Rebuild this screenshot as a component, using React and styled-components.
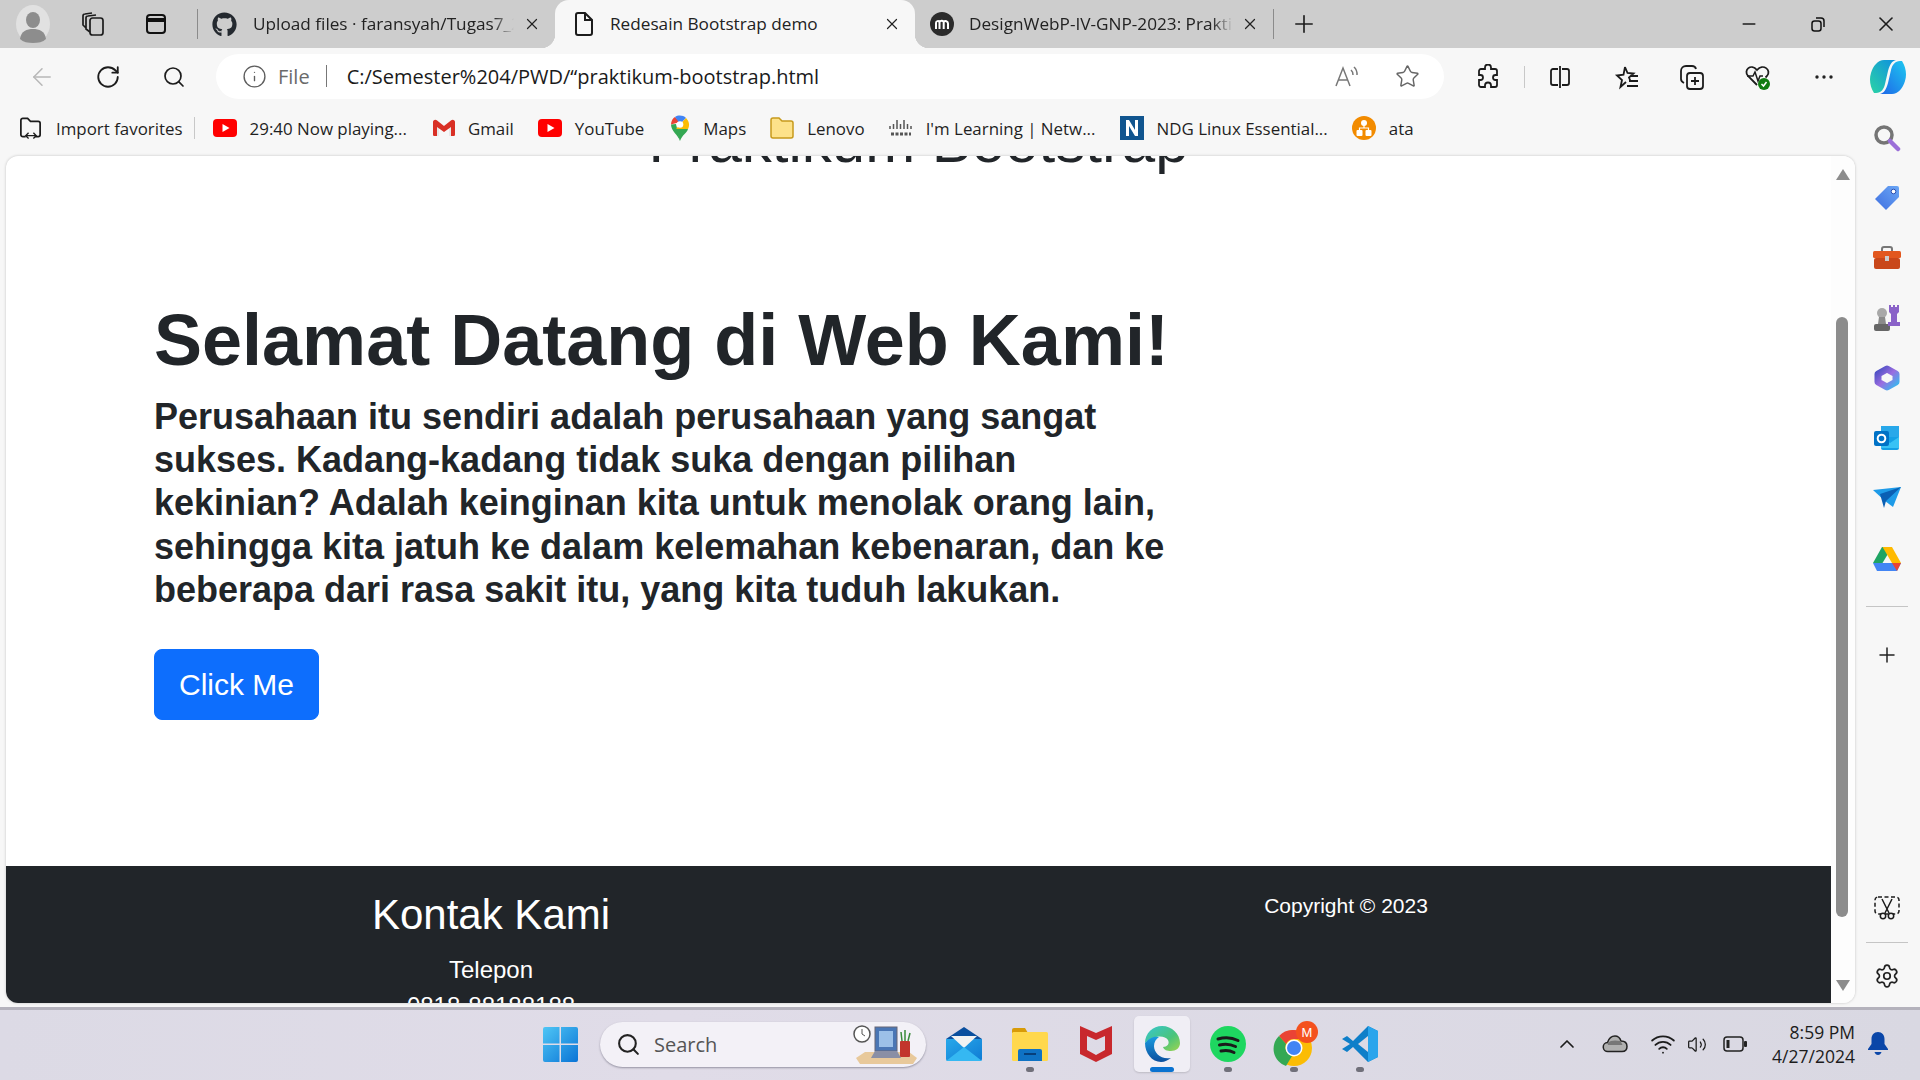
import React from "react";
import styled, { createGlobalStyle } from "styled-components";
import { FaGithub } from "react-icons/fa";
import { ArrowLeft, RotateCw, Search, Info, Star, Plus, X, Minus, ChevronUp, Settings, Wifi, Volume2 } from "lucide-react";

const GlobalStyle = createGlobalStyle`
  html, body { margin: 0; padding: 0; background: #f7f7f7; }
  body { font-family: "Liberation Sans", Arial, sans-serif; overflow: hidden; }
  * { box-sizing: border-box; }
`;

const uiFont = `"Open Sans", "Noto Sans", sans-serif`;

const Screen = styled.div`
  width: 1920px;
  height: 1080px;
  display: flex;
  flex-direction: column;
  background: #f7f7f7;
`;

const TabStrip = styled.div`
  height: 48px;
  flex: none;
  display: flex;
  align-items: stretch;
  background: #cdcdcd;
`;

const Slot = styled.div`
  flex: none;
  width: ${p => p.$w}px;
  display: flex;
  align-items: center;
  justify-content: center;
  color: ${p => p.$color || "#1c1c1c"};
`;

const StripDivider = styled.div`
  flex: none;
  width: 1px;
  height: 30px;
  align-self: center;
  margin: ${p => p.$margin || 0};
  background: #8b8b8b;
`;

const Tab = styled.div`
  position: relative;
  flex: none;
  width: ${p => p.$w}px;
  display: flex;
  align-items: center;
  gap: ${p => p.$gap}px;
  padding: 0 14px 0 ${p => p.$pad}px;
  background: ${p => (p.$active ? "#f7f7f7" : "transparent")};
  border-radius: 14px 14px 0 0;
  font: 17.2px ${uiFont};
  color: #222;

  ${p => p.$active && `
    &::before, &::after {
      content: "";
      position: absolute;
      bottom: 0;
      width: 14px;
      height: 14px;
    }
    &::before {
      left: -14px;
      background: radial-gradient(circle at 0 0, transparent 14px, #f7f7f7 14.5px);
    }
    &::after {
      right: -14px;
      background: radial-gradient(circle at 100% 0, transparent 14px, #f7f7f7 14.5px);
    }
  `}
`;

const TabTitle = styled.div`
  flex: 1;
  min-width: 0;
  margin-right: -7px;
  padding-bottom: 2px;
  white-space: nowrap;
  overflow: hidden;
  ${p => p.$fade && `mask-image: linear-gradient(to right, #000 92%, transparent 100%);`}
`;

const Spacer = styled.div`
  flex: 1;
`;

const Toolbar = styled.div`
  height: 57px;
  flex: none;
  display: flex;
  align-items: center;
  padding: 0 0 0 9px;
`;

const AddressBar = styled.div`
  flex: none;
  width: 1228px;
  height: 45px;
  margin-left: 9px;
  display: flex;
  align-items: center;
  padding: 0 0 1px 26px;
  background: #fff;
  border-radius: 23px;
  font: 20px ${uiFont};
`;

const FileLabel = styled.span`
  margin-left: 11px;
  color: #6a6a6a;
`;

const BarDivider = styled.div`
  flex: none;
  width: 1px;
  height: 22px;
  margin: ${p => p.$margin};
  background: ${p => p.$color || "#777"};
`;

const Url = styled.span`
  flex: 1;
  color: #1a1a1a;
  white-space: nowrap;
`;

const Body = styled.div`
  flex: 1;
  min-height: 0;
  display: flex;
`;

const MainColumn = styled.div`
  flex: 1;
  min-width: 0;
  display: flex;
  flex-direction: column;
`;

const Bookmarks = styled.div`
  height: 51px;
  flex: none;
  display: flex;
  align-items: center;
  padding: 0 0 5px 18px;
  font: 16.9px ${uiFont};
  color: #1f1f1f;
`;

const Bookmark = styled.div`
  flex: none;
  display: flex;
  align-items: center;
  gap: 13px;
  margin-right: ${p => p.$gap || 26}px;
  white-space: nowrap;
`;

const PageFrame = styled.div`
  flex: 1;
  min-height: 0;
  margin: 0 0 4px 6px;
  display: flex;
  background: #fff;
  border-radius: 12px;
  overflow: hidden;
  box-shadow: 0 0 3px rgba(0, 0, 0, 0.22);
`;

const PageContent = styled.div`
  flex: 1;
  min-width: 0;
  display: flex;
  flex-direction: column;
  overflow: hidden;
  color: #212529;
`;

const ClippedTitle = styled.h2`
  flex: none;
  margin: -50px 0 0;
  font-size: 60px;
  font-weight: 400;
  line-height: 72px;
  text-align: center;
`;

const Hero = styled.section`
  flex: 1;
  min-height: 0;
  padding: 119px 0 0 148px;
`;

const HeroTitle = styled.h1`
  margin: 0 0 12px;
  font-size: 72px;
  font-weight: 700;
  line-height: 86px;
`;

const Lead = styled.p`
  width: 1030px;
  margin: 0 0 38px;
  font-size: 36px;
  font-weight: 700;
  line-height: 43.2px;
`;

const PrimaryButton = styled.button`
  display: block;
  padding: 12px 24px;
  border: 1px solid #0d6efd;
  border-radius: 8px;
  background: #0d6efd;
  color: #fff;
  font: 30px/45px "Liberation Sans", Arial, sans-serif;
`;

const Footer = styled.footer`
  flex: none;
  height: 137px;
  display: grid;
  grid-template-columns: 855px 855px;
  justify-content: center;
  overflow: hidden;
  background: #212529;
  color: #fff;
  text-align: center;
`;

const FooterColumn = styled.div`
  padding-top: ${p => p.$top}px;
`;

const FooterHeading = styled.h3`
  margin: 0 0 12px;
  font-size: 42px;
  font-weight: 400;
  line-height: 50px;
`;

const FooterText = styled.p`
  margin: 0;
  font-size: ${p => p.$size || 24}px;
  line-height: 36px;
`;

const Scrollbar = styled.div`
  flex: none;
  width: 24px;
  position: relative;
  background: #fdfdfd;
`;

const ScrollThumb = styled.div`
  position: absolute;
  top: 161px;
  left: 5px;
  width: 12px;
  height: 600px;
  border-radius: 7px;
  background: #8c8c8c;
`;

const ScrollArrow = styled.div`
  position: absolute;
  left: 5px;
  ${p => (p.$down ? "bottom: 12px;" : "top: 13px;")}
  width: 0;
  height: 0;
  border-left: 7px solid transparent;
  border-right: 7px solid transparent;
  ${p => (p.$down ? "border-top: 11px solid #8c8c8c;" : "border-bottom: 11px solid #8c8c8c;")}
`;

const Sidebar = styled.aside`
  flex: none;
  width: 65px;
  display: flex;
  flex-direction: column;
  align-items: center;
  padding: 3px 2px 11px 0;
`;

const SideSlot = styled.div`
  flex: none;
  height: ${p => p.$h || 60}px;
  display: flex;
  align-items: center;
  justify-content: center;
  color: #222;
`;

const SideRule = styled.div`
  flex: none;
  width: 42px;
  height: 1px;
  margin: ${p => p.$margin || "0"};
  background: #c5c5c5;
`;

const Taskbar = styled.div`
  height: 73px;
  flex: none;
  display: flex;
  align-items: center;
  padding: 0 19px 2px 530px;
  border-top: 3px solid #b4b2bc;
  background: linear-gradient(90deg, #dcdae5, #e0dce8 35%, #d9d8e2);
`;

const SearchBox = styled.div`
  flex: none;
  width: 326px;
  height: 45px;
  margin: 0 5px 0 10px;
  display: flex;
  align-items: center;
  gap: 13px;
  padding: 0 8px 0 16px;
  border-radius: 23px;
  background: #f3f1f7;
  box-shadow: 0 1px 2px rgba(60, 60, 80, 0.45);
  font: 20px ${uiFont};
  color: #555;
`;

const AppSlot = styled.div`
  position: relative;
  flex: none;
  width: 66px;
  height: 56px;
  display: flex;
  align-items: center;
  justify-content: center;

  ${p => p.$active && `
    &::before {
      content: "";
      position: absolute;
      inset: 0 5px;
      border-radius: 5px;
      background: #f0eef5;
      box-shadow: 0 1px 2px rgba(0, 0, 0, 0.15);
    }
    & > svg { position: relative; }
  `}
`;

const RunDot = styled.span`
  position: absolute;
  left: 50%;
  bottom: 0;
  width: ${p => (p.$active ? 24 : 8)}px;
  height: 5px;
  margin-left: ${p => (p.$active ? -12 : -4)}px;
  border-radius: 3px;
  background: ${p => (p.$active ? "#0a72d0" : "#70707a")};
`;

const Clock = styled.div`
  flex: none;
  width: 92px;
  text-align: right;
  font: 17.5px/24px ${uiFont};
  color: #1c1c1c;
  white-space: nowrap;
`;

const MoodleIcon = () => (
  <svg width="24" height="24" viewBox="0 0 24 24">
    <circle cx="12" cy="12" r="12" fill="#2b2b2b" />
    <path d="M6 17v-6c0-2 2.500-2.600 3.500-1 1-1.600 3.200-1.600 4.200-.2 1.300-1.300 4.300-.8 4.300 1.700V17M9.500 10v7M13.700 10v7" stroke="#fff" strokeWidth="2" fill="none" />
  </svg>
);

const FileIcon = () => (
  <svg width="22" height="26" viewBox="0 0 22 26" fill="none" stroke="#1c1c1c" strokeWidth="2">
    <path d="M3 4a2 2 0 0 1 2-2h7l7 7v13a2 2 0 0 1-2 2H5a2 2 0 0 1-2-2z" />
    <path d="M12 2v7h7" />
  </svg>
);

const Avatar = () => (
  <svg width="34" height="38" viewBox="0 0 34 38">
    <ellipse cx="17" cy="19" rx="17" ry="19" fill="#e1e1e1" />
    <ellipse cx="17" cy="15" rx="7" ry="8" fill="#8d8d8d" />
    <path d="M4 34c1-8 7-10 13-10s12 2 13 10c-3 3-8 4-13 4S7 37 4 34z" fill="#8d8d8d" />
  </svg>
);

const WorkspaceIcon = () => (
  <svg width="26" height="26" viewBox="0 0 26 26" fill="none" stroke="#1c1c1c" strokeWidth="1.700">
    <rect x="10" y="7" width="13" height="17" rx="2.500" />
    <path d="M10 21 6 18V7a2 2 0 0 1 2-2l8-1M6 17 3 14V5a2 2 0 0 1 2-2l7-1" />
  </svg>
);

const TabActionsIcon = () => (
  <svg width="22" height="22" viewBox="0 0 22 22" fill="none" stroke="#111" strokeWidth="2">
    <rect x="2" y="2" width="18" height="18" rx="3" />
    <path d="M2 7h18" strokeWidth="4" />
  </svg>
);

const RestoreIcon = () => (
  <svg width="16" height="16" viewBox="0 0 16 16" fill="none" stroke="#111" strokeWidth="1.500">
    <rect x="2" y="5" width="9" height="10" rx="2.500" />
    <path d="M6 2h5a3 3 0 0 1 3 3v6" />
  </svg>
);

const ReadAloudIcon = () => (
  <svg width="26" height="24" viewBox="0 0 26 24" fill="none" stroke="#777" strokeWidth="1.500">
    <path d="M2 22 9 4l7 18M4.500 16h9" />
    <path d="M17 6a6 6 0 0 1 2 5M20 3a10 10 0 0 1 3 8" />
  </svg>
);

const PuzzleIcon = () => (
  <svg width="24" height="26" viewBox="0 0 24 26" fill="none" stroke="#1c1c1c" strokeWidth="1.800">
    <path d="M9 3.500a3 3 0 0 1 6 0V5h4a2 2 0 0 1 2 2v4h-1.500a2.500 2.500 0 0 0 0 5H21v5a2 2 0 0 1-2 2h-4v-1.500a3 3 0 0 0-6 0V23H5a2 2 0 0 1-2-2v-5h1.500a2.500 2.500 0 0 0 0-5H3V7a2 2 0 0 1 2-2h4z" />
  </svg>
);

const SplitIcon = () => (
  <svg width="24" height="24" viewBox="0 0 24 24" fill="none" stroke="#1c1c1c" strokeWidth="1.800">
    <path d="M10 4H5a2 2 0 0 0-2 2v12a2 2 0 0 0 2 2h5M14 4h5a2 2 0 0 1 2 2v12a2 2 0 0 1-2 2h-5M12 1v22" />
  </svg>
);

const FavoritesIcon = () => (
  <svg width="26" height="26" viewBox="0 0 26 26" fill="none" stroke="#1c1c1c" strokeWidth="1.800">
    <path d="M11 3l2.500 6 6 .5-4.500 4 1.200 3M12 18l-5.500 5 1.500-7-5-4.500 6.500-.8L11 3" />
    <path d="M17 12h7M15 17h9M13 22h11" />
  </svg>
);

const CollectionsIcon = () => (
  <svg width="26" height="26" viewBox="0 0 26 26" fill="none" stroke="#1c1c1c" strokeWidth="1.800">
    <rect x="8" y="9" width="16" height="16" rx="3" />
    <path d="M16 13v8M12 17h8M5 19c-2-1-3-2-3-4V7a5 5 0 0 1 5-5h6c2 0 3.500 1 4 3" />
  </svg>
);

const HealthIcon = () => (
  <svg width="28" height="28" viewBox="0 0 28 28" fill="none">
    <path d="M13 22 4 13c-5-6 3-13 9-6 6-7 15 0 10 6l-1.500 1.500" stroke="#1c1c1c" strokeWidth="1.800" />
    <path d="M3 13h6l2-4 3 9 2-5h3" stroke="#1c1c1c" strokeWidth="1.500" />
    <circle cx="20" cy="21" r="6" fill="#107c10" />
    <path d="M17.500 21l2 2 3-4" stroke="#fff" strokeWidth="1.500" />
  </svg>
);

const MoreIcon = () => (
  <svg width="20" height="6" viewBox="0 0 20 6" fill="#222">
    <circle cx="3" cy="3" r="1.700" />
    <circle cx="10" cy="3" r="1.700" />
    <circle cx="17" cy="3" r="1.700" />
  </svg>
);

const CopilotIcon = () => (
  <svg width="36" height="36" viewBox="0 0 36 36">
    <defs>
      <linearGradient id="copA" x1="0" y1="1" x2="1" y2="0">
        <stop offset="0" stopColor="#2bd4a5" />
        <stop offset="1" stopColor="#0f8fe0" />
      </linearGradient>
      <linearGradient id="copB" x1="0" y1="1" x2="1" y2="0">
        <stop offset="0" stopColor="#1e66e8" />
        <stop offset="1" stopColor="#1ec8f0" />
      </linearGradient>
    </defs>
    <path d="M14 1h12c-4 1-6 4-8 11l-3 13c-1 5-4 9-9 9H4C0 28-1 20 1 14 3 7 8 1 14 1z" fill="url(#copA)" />
    <path d="M22 35H10c4-1 6-4 8-11l3-13c1-5 4-9 9-9h2c4 6 5 14 3 20-2 7-7 13-13 13z" fill="url(#copB)" />
  </svg>
);

const ImportIcon = () => (
  <svg width="25" height="26" viewBox="0 0 26 26" fill="none" stroke="#1c1c1c" strokeWidth="1.800">
    <path d="M8 22H5a2 2 0 0 1-2-2V5a2 2 0 0 1 2-2h5l3 3h8a2 2 0 0 1 2 2v12a2 2 0 0 1-2 2h-3" />
    <path d="M9 21h9M11 18l-3 3 3 3M16 18l3 3-3 3" strokeWidth="1.400" />
  </svg>
);

const YoutubeIcon = () => (
  <svg width="24" height="18" viewBox="0 0 24 18">
    <rect width="24" height="18" rx="4" fill="#f00" />
    <path d="M9.500 5v8l7-4z" fill="#fff" />
  </svg>
);

const GmailIcon = () => (
  <svg width="22" height="18" viewBox="0 0 22 18">
    <path d="M3 17V4l8 6 8-6v13h-3V8l-5 4-5-4v9z" fill="#e8e8e8" />
    <path d="M0 3v12.500C0 16.500.7 17 1.500 17H4V8l7 5 7-5v9h2.500c.8 0 1.500-.5 1.500-1.500V3c0-2-2.200-3-3.800-1.800L11 7 3.800 1.200C2.200 0 0 1 0 3z" fill="#d93025" />
  </svg>
);

const MapsIcon = () => (
  <svg width="20" height="26" viewBox="0 0 20 26">
    <path d="M10 26C8 20 1 16 1 9.500L6 9z" fill="#34a853" />
    <path d="M1 9.500C1 6 3 3 5 2l5 5z" fill="#ea4335" />
    <path d="M5 2c3-2 8-2 11 1l-6 6z" fill="#4285f4" />
    <path d="M16 3c3 3 4 7 2 11L6 14z" fill="#fbbc04" />
    <path d="M10 26c2-6 7-8 8-12H6z" fill="#34a853" />
    <circle cx="10" cy="9.500" r="3.300" fill="#fff" />
  </svg>
);

const FolderIcon = () => (
  <svg width="24" height="24" viewBox="0 0 24 24">
    <path d="M1 4a2 2 0 0 1 2-2h6l3 3h9a2 2 0 0 1 2 2v13a2 2 0 0 1-2 2H3a2 2 0 0 1-2-2z" fill="#fde28a" stroke="#c79a1c" strokeWidth="1.500" />
  </svg>
);

const CiscoIcon = () => (
  <svg width="24" height="22" viewBox="0 0 24 22" stroke="#555" strokeWidth="1.500">
    <path d="M1 9v3M4.500 7v5M8 3v9M11.500 7v5M15 3v9M18.500 7v5M22 9v3" />
    <path d="M2 17h20" strokeWidth="3" strokeDasharray="3 1.500" />
  </svg>
);

const NetacadIcon = () => (
  <svg width="24" height="24" viewBox="0 0 24 24">
    <rect width="24" height="24" fill="#11558f" />
    <path d="M6 20V4h3l6 10V4h3v16h-3L9 10v10z" fill="#fff" />
  </svg>
);

const AtaIcon = () => (
  <svg width="24" height="24" viewBox="0 0 24 24">
    <circle cx="12" cy="12" r="12" fill="#f28b00" />
    <g fill="#fff">
      <circle cx="12" cy="7" r="3" />
      <rect x="4.500" y="14" width="6" height="6" rx="1" />
      <rect x="13.500" y="14" width="6" height="6" rx="1" />
    </g>
    <path d="M12 8v4M7.500 15v-3h9v3" stroke="#fff" strokeWidth="1.200" fill="none" />
  </svg>
);

const SideSearch = () => (
  <svg width="28" height="28" viewBox="0 0 28 28" fill="none">
    <circle cx="11" cy="11" r="8" stroke="#757575" strokeWidth="3.500" />
    <path d="M17 17l8 8" stroke="#9b6fd8" strokeWidth="4.500" strokeLinecap="round" />
  </svg>
);

const TagIcon = () => (
  <svg width="26" height="26" viewBox="0 0 26 26">
    <defs>
      <linearGradient id="tagG" x1="0" y1="1" x2="1" y2="0">
        <stop offset="0" stopColor="#3f6fe0" />
        <stop offset="1" stopColor="#6aa6f5" />
      </linearGradient>
    </defs>
    <path d="M14 1h9a2 2 0 0 1 2 2v9L12 25 1 14z" fill="url(#tagG)" />
    <circle cx="19.500" cy="6.500" r="2.300" fill="#fff" stroke="#2d4fb0" />
  </svg>
);

const ToolboxIcon = () => (
  <svg width="28" height="24" viewBox="0 0 28 24">
    <path d="M9 6V3a2 2 0 0 1 2-2h6a2 2 0 0 1 2 2v3" fill="none" stroke="#777" strokeWidth="2" />
    <rect y="5" width="28" height="7" rx="1.500" fill="#e2571e" />
    <rect x="1" y="12" width="26" height="11" rx="2" fill="#c9471a" />
    <rect x="12" y="10" width="4" height="5" fill="#ccc" />
  </svg>
);

const GamesIcon = () => (
  <svg width="28" height="28" viewBox="0 0 28 28">
    <circle cx="9" cy="9" r="5" fill="#a8a8a8" />
    <path d="M6 13h6l1 7H5z" fill="#8a8a8a" />
    <rect x="1" y="20" width="16" height="7" rx="2" fill="#666" />
    <path d="M16 1h2v2h2V1h2v2h2V1h2v7l-2 2v8h3v4H15v-4h3v-8l-2-2z" fill="#8a62c8" />
  </svg>
);

const M365Icon = () => (
  <svg width="26" height="28" viewBox="0 0 26 28" fill="none">
    <defs>
      <linearGradient id="m365G" x1="0" y1="0" x2="1" y2="1">
        <stop offset="0" stopColor="#4a4fc4" />
        <stop offset=".5" stopColor="#9a6de0" />
        <stop offset="1" stopColor="#3ab6ef" />
      </linearGradient>
    </defs>
    <path d="M13 5 4 10v8l9 5 9-5v-8z" stroke="url(#m365G)" strokeWidth="7" strokeLinejoin="round" />
  </svg>
);

const OutlookIcon = () => (
  <svg width="26" height="26" viewBox="0 0 26 26">
    <rect x="7" y="1" width="18" height="13" fill="#28a8ea" />
    <path d="M7 12h18v11a2 2 0 0 1-2 2H9a2 2 0 0 1-2-2z" fill="#14a0e6" />
    <path d="M25 12 16 18l-9-6v11h18z" fill="#50d9ff" opacity=".6" />
    <rect y="6" width="15" height="15" rx="2" fill="#0072c6" />
    <circle cx="7.500" cy="13.500" r="3.800" fill="none" stroke="#fff" strokeWidth="2" />
  </svg>
);

const SendIcon = () => (
  <svg width="28" height="22" viewBox="0 0 28 22">
    <path d="M0 3 28 0 20 20 12 14z" fill="#1e9be8" />
    <path d="M28 0 7 7l4 14 2-7z" fill="#0a5fb4" />
  </svg>
);

const DriveIcon = () => (
  <svg width="28" height="25" viewBox="0 0 28 25">
    <path d="M9 1h10l-5 8.500L9.500 17H0z" fill="#1fa463" />
    <path d="M9.500 1H19l9 16h-9z" fill="#ffba00" />
    <path d="M5 17h23l-4 8H4L0 17z" fill="#4285f4" />
    <path d="M19 17h9l-4 8z" fill="#ea4335" />
  </svg>
);

const SnipIcon = () => (
  <svg width="26" height="24" viewBox="0 0 26 24" fill="none" stroke="#1c1c1c" strokeWidth="1.500">
    <rect x="1" y="1" width="24" height="17" rx="3" strokeDasharray="4 2.500" />
    <path d="M8 3l7 14M18 3l-7 14" />
    <circle cx="9" cy="20" r="2.700" fill="#f7f7f7" />
    <circle cx="17" cy="20" r="2.700" fill="#f7f7f7" />
  </svg>
);

const WindowsLogo = () => (
  <svg width="35" height="35" viewBox="0 0 35 35">
    <defs>
      <linearGradient id="winG" x1="0" y1="0" x2="1" y2="1">
        <stop offset="0" stopColor="#4fc6f5" />
        <stop offset="1" stopColor="#0a74d6" />
      </linearGradient>
    </defs>
    <path d="M0 2a2 2 0 0 1 2-2h14.500v16.500H0zM18 0h15a2 2 0 0 1 2 2v14.500H18zM0 18h16.500v17H2a2 2 0 0 1-2-2zM18 18h17v15a2 2 0 0 1-2 2H18z" fill="url(#winG)" />
  </svg>
);

const SearchArt = () => (
  <svg width="66" height="44" viewBox="0 0 66 44">
    <path d="M4 36 13 30h44l8 6-4 6H8z" fill="#e8c99b" />
    <circle cx="10" cy="12" r="8" fill="#fff" stroke="#555" strokeWidth="1.500" />
    <path d="M10 7v5l3 2" stroke="#555" fill="none" />
    <rect x="23" y="5" width="22" height="24" fill="#4a76b5" stroke="#667" />
    <rect x="27" y="9" width="14" height="16" fill="#9cc0e8" />
    <path d="M19 36l4-7h22l4 7z" fill="#8a8fa5" />
    <rect x="48" y="19" width="10" height="16" rx="1" fill="#c2352c" />
    <path d="M50 19l-1-9M53 19v-11M56 19l2-8" stroke="#3a8a3a" strokeWidth="1.500" />
  </svg>
);

const MailIcon = () => (
  <svg width="36" height="34" viewBox="0 0 36 34">
    <defs>
      <linearGradient id="mailG" x1="0" y1="0" x2="1" y2="1">
        <stop offset="0" stopColor="#28a8ea" />
        <stop offset="1" stopColor="#0f7bd4" />
      </linearGradient>
    </defs>
    <path d="M0 12 18 0l18 12z" fill="#0a4f9e" />
    <path d="M0 12h36v20a2 2 0 0 1-2 2H2a2 2 0 0 1-2-2z" fill="url(#mailG)" />
    <path d="M5 9h26l-13 12z" fill="#f2f2f2" />
    <path d="M0 34 18 20l18 14z" fill="#35b8f2" />
  </svg>
);

const ExplorerIcon = () => (
  <svg width="36" height="34" viewBox="0 0 36 34">
    <path d="M0 3a2 2 0 0 1 2-2h11l3 5H0z" fill="#d89b08" />
    <rect y="5" width="36" height="29" rx="1.500" fill="#ffd84d" />
    <path d="M6 24a2 2 0 0 1 2-2h20a2 2 0 0 1 2 2v10H6z" fill="#0f72c4" />
    <rect x="12" y="26" width="12" height="2" fill="#073f7a" />
  </svg>
);

const McAfeeIcon = () => (
  <svg width="32" height="36" viewBox="0 0 32 36">
    <path d="M0 0 16 7 32 0v28L16 36 0 28zM7 10v14l9 5 9-5V10l-9 4z" fill="#c8282d" fillRule="evenodd" />
  </svg>
);

const EdgeIcon = () => (
  <svg width="36" height="36" viewBox="0 0 36 36">
    <defs>
      <linearGradient id="edgeG" x1="0" y1="0" x2="1" y2="1">
        <stop offset="0" stopColor="#37c6d0" />
        <stop offset=".6" stopColor="#4ac47a" />
        <stop offset="1" stopColor="#9ed44f" />
      </linearGradient>
      <linearGradient id="edgeB" x1="0" y1="0" x2="0" y2="1">
        <stop offset="0" stopColor="#1a9be0" />
        <stop offset="1" stopColor="#0b4f9e" />
      </linearGradient>
    </defs>
    <path d="M1 17C1 7 9 0 18 0c10 0 18 8 18 17 0 5-4 8-9 8-4 0-7-1-8-4 4 0 7-3 5-7-3-5-15-5-23 3z" fill="url(#edgeG)" />
    <path d="M1 17c5-6 10-7 14-6-3 2-5 5-5 9 0 7 7 14 17 12-3 2-6 4-10 4C8 36 1 27 1 17z" fill="url(#edgeB)" />
  </svg>
);

const SpotifyIcon = () => (
  <svg width="36" height="36" viewBox="0 0 36 36" fill="none">
    <circle cx="18" cy="18" r="18" fill="#1ed760" />
    <path d="M8 13c7-2 14-1.500 20 1.500M9.500 19c5.500-1.500 11-1 16 1.500M11 25c4.500-1 9-.7 13 1.500" stroke="#1a1a1a" strokeWidth="3" strokeLinecap="round" />
  </svg>
);

const ChromeIcon = () => (
  <svg width="48" height="46" viewBox="0 0 48 46">
    <g transform="translate(6 9)">
      <circle cx="18" cy="18" r="18" fill="#fbbc04" />
      <path d="M18 0a18 18 0 0 1 15.600 9H18a9 9 0 0 0-8 5L3 6a18 18 0 0 1 15-6z" fill="#ea4335" />
      <path d="M3 6l7 8a9 9 0 0 0 6 12l-6 10A18 18 0 0 1 3 6z" fill="#34a853" />
      <circle cx="18" cy="18" r="8.500" fill="#fff" />
      <circle cx="18" cy="18" r="7" fill="#4285f4" />
    </g>
    <circle cx="37" cy="11" r="11" fill="#f4511e" />
    <text x="37" y="16" textAnchor="middle" fontSize="13" fontFamily="Liberation Sans" fill="#fff">M</text>
  </svg>
);

const VsCodeIcon = () => (
  <svg width="36" height="36" viewBox="0 0 36 36">
    <path d="M26 0 36 5v26l-10 5L11 21l-6 5-5-3 8-5-8-5 5-3 6 5z" fill="#0e7fc9" />
    <path d="M26 10 16 18l10 8z" fill="#dcdae5" />
    <path d="M26 0 36 5v26l-10 5z" fill="#2aa5ec" />
  </svg>
);

const CloudIcon = () => (
  <svg width="26" height="18" viewBox="0 0 26 18">
    <path d="M6 16.500a4.500 4.500 0 0 1-.5-9C7 3 10 1 13 1c3 0 5 2 6 5 3.500 0 6 2 6 5.500 0 3-2 5-5 5z" fill="#b0b0b0" stroke="#222" strokeWidth="1.500" />
    <path d="M5.500 8c3-3 8-3 13-2l2 4H6z" fill="#777" />
  </svg>
);

const BatteryIcon = () => (
  <svg width="24" height="16" viewBox="0 0 24 16">
    <rect x="1" y="1" width="19" height="14" rx="3" fill="none" stroke="#222" strokeWidth="1.500" />
    <rect x="3.500" y="4" width="3" height="8" fill="#222" />
    <rect x="21" y="5" width="3" height="6" rx="1" fill="#222" />
  </svg>
);

const BellIcon = () => (
  <svg width="20" height="24" viewBox="0 0 20 24" fill="#0a46a8">
    <path d="M10 0c4 0 6.500 3 6.500 7v5l3.500 5v1H0v-1l3.500-5V7C3.500 3 6 0 10 0z" />
    <path d="M6.500 20h7c-.5 2-2 3-3.500 3s-3-1-3.500-3z" />
  </svg>
);

const bookmarks = [
  { icon: <ImportIcon />, label: "Import favorites", gap: 11 },
  { icon: <YoutubeIcon />, label: "29:40 Now playing...", gap: 26 },
  { icon: <GmailIcon />, label: "Gmail", gap: 24 },
  { icon: <YoutubeIcon />, label: "YouTube", gap: 26 },
  { icon: <MapsIcon />, label: "Maps", gap: 24 },
  { icon: <FolderIcon />, label: "Lenovo", gap: 24 },
  { icon: <CiscoIcon />, label: "I'm Learning | Netw...", gap: 24 },
  { icon: <NetacadIcon />, label: "NDG Linux Essential...", gap: 24 },
  { icon: <AtaIcon />, label: "ata", gap: 0 },
];

const sideIcons = [
  <SideSearch />, <TagIcon />, <ToolboxIcon />, <GamesIcon />,
  <M365Icon />, <OutlookIcon />, <SendIcon />, <DriveIcon />,
];

const apps = [
  { icon: <MailIcon /> },
  { icon: <ExplorerIcon />, running: true },
  { icon: <McAfeeIcon /> },
  { icon: <EdgeIcon />, active: true },
  { icon: <SpotifyIcon />, running: true },
  { icon: <ChromeIcon />, running: true },
  { icon: <VsCodeIcon />, running: true },
];

export default function App() {
  return (
    <Screen>
      <GlobalStyle />
      <TabStrip>
        <Slot $w={66}><Avatar /></Slot>
        <Slot $w={54}><WorkspaceIcon /></Slot>
        <Slot $w={72}><TabActionsIcon /></Slot>
        <StripDivider $margin="0 0 0 5px" />
        <Tab $w={357} $pad={14} $gap={16}>
          <FaGithub size={25} color="#24292f" />
          <TabTitle $fade>Upload files · faransyah/Tugas7_2</TabTitle>
          <X size={18} strokeWidth={1.6} />
        </Tab>
        <Tab $w={360} $pad={18} $gap={15} $active>
          <FileIcon />
          <TabTitle>Redesain Bootstrap demo</TabTitle>
          <X size={18} strokeWidth={1.6} />
        </Tab>
        <Tab $w={358} $pad={15} $gap={15}>
          <MoodleIcon />
          <TabTitle $fade>DesignWebP-IV-GNP-2023: Prakti</TabTitle>
          <X size={18} strokeWidth={1.6} />
        </Tab>
        <StripDivider />
        <Slot $w={60}><Plus size={28} strokeWidth={1.4} /></Slot>
        <Spacer />
        <Slot $w={68}><Minus size={20} strokeWidth={1.8} /></Slot>
        <Slot $w={69}><RestoreIcon /></Slot>
        <Slot $w={68}><X size={24} strokeWidth={1.6} /></Slot>
      </TabStrip>

      <Toolbar>
        <Slot $w={66} $color="#b8b8b8"><ArrowLeft size={28} strokeWidth={1.3} /></Slot>
        <Slot $w={66}><RotateCw size={26} strokeWidth={1.7} /></Slot>
        <Slot $w={66}><Search size={24} strokeWidth={1.7} /></Slot>
        <AddressBar>
          <Info size={25} strokeWidth={1.3} color="#5d5d5d" />
          <FileLabel>File</FileLabel>
          <BarDivider $margin="0 20px 0 16px" />
          <Url>C:/Semester%204/PWD/“praktikum-bootstrap.html</Url>
          <Slot $w={46}><ReadAloudIcon /></Slot>
          <Slot $w={74} $color="#666"><Star size={25} strokeWidth={1.4} /></Slot>
        </AddressBar>
        <Slot $w={88}><PuzzleIcon /></Slot>
        <BarDivider $color="#c8c8c8" $margin="0 0 0 -8px" />
        <Slot $w={69}><SplitIcon /></Slot>
        <Slot $w={65}><FavoritesIcon /></Slot>
        <Slot $w={66}><CollectionsIcon /></Slot>
        <Slot $w={66}><HealthIcon /></Slot>
        <Slot $w={66}><MoreIcon /></Slot>
        <Slot $w={62}><CopilotIcon /></Slot>
      </Toolbar>

      <Body>
        <MainColumn>
          <Bookmarks>
            {bookmarks.map((b, i) => (
              <React.Fragment key={b.label + i}>
                <Bookmark $gap={b.gap}>{b.icon}{b.label}</Bookmark>
                {i === 0 && <BarDivider $color="#c8c8c8" $margin="0 18px 0 0" />}
              </React.Fragment>
            ))}
          </Bookmarks>
          <PageFrame>
            <PageContent>
              <ClippedTitle>Praktikum Bootstrap</ClippedTitle>
              <Hero>
                <HeroTitle>Selamat Datang di Web Kami!</HeroTitle>
                <Lead>
                  Perusahaan itu sendiri adalah perusahaan yang sangat sukses. Kadang-kadang tidak suka dengan pilihan kekinian? Adalah keinginan kita untuk menolak orang lain, sehingga kita jatuh ke dalam kelemahan kebenaran, dan ke beberapa dari rasa sakit itu, yang kita tuduh lakukan.
                </Lead>
                <PrimaryButton>Click Me</PrimaryButton>
              </Hero>
              <Footer>
                <FooterColumn $top={24}>
                  <FooterHeading>Kontak Kami</FooterHeading>
                  <FooterText>Telepon</FooterText>
                  <FooterText>0818-88188188</FooterText>
                </FooterColumn>
                <FooterColumn $top={22}>
                  <FooterText $size={21}>Copyright © 2023</FooterText>
                </FooterColumn>
              </Footer>
            </PageContent>
            <Scrollbar>
              <ScrollArrow />
              <ScrollThumb />
              <ScrollArrow $down />
            </Scrollbar>
          </PageFrame>
        </MainColumn>
        <Sidebar>
          {sideIcons.map((icon, i) => <SideSlot key={i}>{icon}</SideSlot>)}
          <SideRule $margin="18px 0 18px" />
          <SideSlot $h={60}><Plus size={24} strokeWidth={1.5} /></SideSlot>
          <Spacer />
          <SideSlot $h={40}><SnipIcon /></SideSlot>
          <SideRule $margin="14px 0 13px" />
          <SideSlot $h={40}><Settings size={26} strokeWidth={1.6} /></SideSlot>
        </Sidebar>
      </Body>

      <Taskbar>
        <Slot $w={60}><WindowsLogo /></Slot>
        <SearchBox>
          <Search size={25} strokeWidth={2} color="#222" />
          <Spacer>Search</Spacer>
          <SearchArt />
        </SearchBox>
        {apps.map((a, i) => (
          <AppSlot key={i} $active={a.active}>
            {a.icon}
            {(a.running || a.active) && <RunDot $active={a.active} />}
          </AppSlot>
        ))}
        <Spacer />
        <Slot $w={48}><ChevronUp size={24} strokeWidth={1.7} /></Slot>
        <Slot $w={48}><CloudIcon /></Slot>
        <Slot $w={48}><Wifi size={26} strokeWidth={1.7} /></Slot>
        <Slot $w={20}><Volume2 size={25} strokeWidth={1.5} /></Slot>
        <Slot $w={56}><BatteryIcon /></Slot>
        <Clock>8:59 PM<br />4/27/2024</Clock>
        <Slot $w={46}><BellIcon /></Slot>
      </Taskbar>
    </Screen>
  );
}
